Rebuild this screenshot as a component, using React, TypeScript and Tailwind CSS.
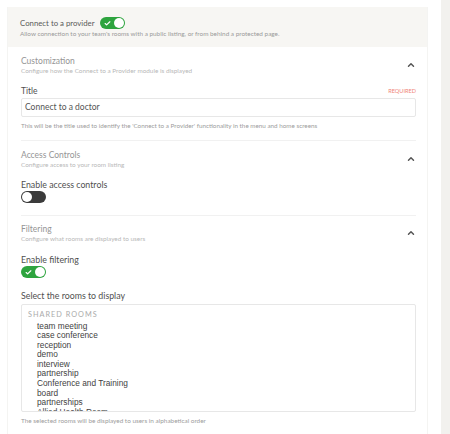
import { ChevronUp, Check } from "lucide-react";

const rooms = [
  "team meeting",
  "case conference",
  "reception",
  "demo",
  "interview",
  "partnership",
  "Conference and Training",
  "board",
  "partnerships",
  "Allied Health Room",
];

function Toggle({ on }: { on: boolean }) {
  return (
    <div
      className={`relative w-[25px] h-[12px] rounded-full ${on ? "bg-[#2ea43f]" : "bg-[#3b3b3b]"}`}
    >
      {on && (
        <Check
          className="absolute left-[4px] top-[2.5px] w-[7px] h-[7px] text-white"
          strokeWidth={4}
        />
      )}
      <div
        className={`absolute top-[1px] w-[10px] h-[10px] rounded-full bg-white ${on ? "right-[1px]" : "left-[1px]"}`}
      />
    </div>
  );
}

function SectionHead({ title, sub }: { title: string; sub: string }) {
  return (
    <div className="flex items-center justify-between">
      <div>
        <div className="text-[8.5px] leading-[12px] text-[#959595]">{title}</div>
        <div className="text-[6.4px] leading-[8px] text-[#b8b8b8]">{sub}</div>
      </div>
      <ChevronUp className="w-[10px] h-[10px] text-[#555]" strokeWidth={3.5} />
    </div>
  );
}

export default function App() {
  return (
    <div
      className="flex w-[450px] h-[434px] bg-white overflow-hidden"
      style={{ fontFamily: "Lato, 'Noto Sans', sans-serif" }}
    >
      <div className="w-[441px] pt-[7px] pl-[7px] pr-[13px]">
        <div className="h-full border-x border-[#f4f4f2]">
          {/* header */}
          <div className="h-[40px] bg-[#f7f6f3] pl-[12px] pt-[10px]">
            <div className="flex items-center gap-[5px]">
              <span className="text-[7.8px] leading-[12px] text-[#5a5a5a]">
                Connect to a provider
              </span>
              <Toggle on />
            </div>
            <div className="text-[6.4px] leading-[10px] text-[#9a9a9a]">
              Allow connection to your team's rooms with a public listing, or from behind a protected page.
            </div>
          </div>

          <div className="pl-[13px] pr-[11px]">
            {/* Customization */}
            <div className="pt-[8px] pb-[10px] border-b border-[#f1f1f1]">
              <SectionHead
                title="Customization"
                sub="Configure how the Connect to a Provider module is displayed"
              />
              <div className="mt-[11px] flex items-center justify-between">
                <span className="text-[8.5px] leading-[10px] text-[#4f4f4f]">Title</span>
                <span className="text-[5.6px] leading-[10px] text-[#f08478]">REQUIRED</span>
              </div>
              <div className="mt-[2px] h-[19px] border border-[#e7e7e7] rounded-[2px] flex items-center px-[3px] text-[8.5px] text-[#555]">
                Connect to a doctor
              </div>
              <div className="mt-[4px] text-[6.3px] leading-[9px] text-[#9c9c9c]">
                This will be the title used to identify the 'Connect to a Provider' functionality in the menu and home screens
              </div>
            </div>

            {/* Access Controls */}
            <div className="pt-[8px] pb-[12px] border-b border-[#f1f1f1]">
              <SectionHead title="Access Controls" sub="Configure access to your room listing" />
              <div className="mt-[11px] text-[8.8px] leading-[10px] text-[#4f4f4f]">
                Enable access controls
              </div>
              <div className="mt-[1px]">
                <Toggle on={false} />
              </div>
            </div>

            {/* Filtering */}
            <div className="pt-[7px]">
              <SectionHead title="Filtering" sub="Configure what rooms are displayed to users" />
              <div className="mt-[12px] text-[8.8px] leading-[10px] text-[#4f4f4f]">
                Enable filtering
              </div>
              <div className="mt-[1px]">
                <Toggle on />
              </div>
              <div className="mt-[13px] text-[8.8px] leading-[10px] text-[#4f4f4f]">
                Select the rooms to display
              </div>
              <div className="mt-[3px] h-[108px] border border-[#e7e7e7] rounded-[2px] overflow-hidden pl-[6px] pt-[5px]">
                <div className="text-[7.3px] leading-[10px] tracking-[1px] text-[#ababab]">SHARED ROOMS</div>
                <div
                  className="mt-[1.5px] pl-[9px] text-[8.3px] leading-[9.6px] text-[#3f3f3f]"
                  style={{ fontFamily: "'Liberation Sans', Arial, sans-serif" }}
                >
                  {rooms.map((r) => (
                    <div key={r}>{r}</div>
                  ))}
                </div>
              </div>
              <div className="mt-[4px] text-[6.4px] leading-[9px] text-[#9c9c9c]">
                The selected rooms will be displayed to users in alphabetical order
              </div>
            </div>
          </div>
        </div>
      </div>
      <div className="flex-1 bg-[#f2f1ee]" />
    </div>
  );
}
